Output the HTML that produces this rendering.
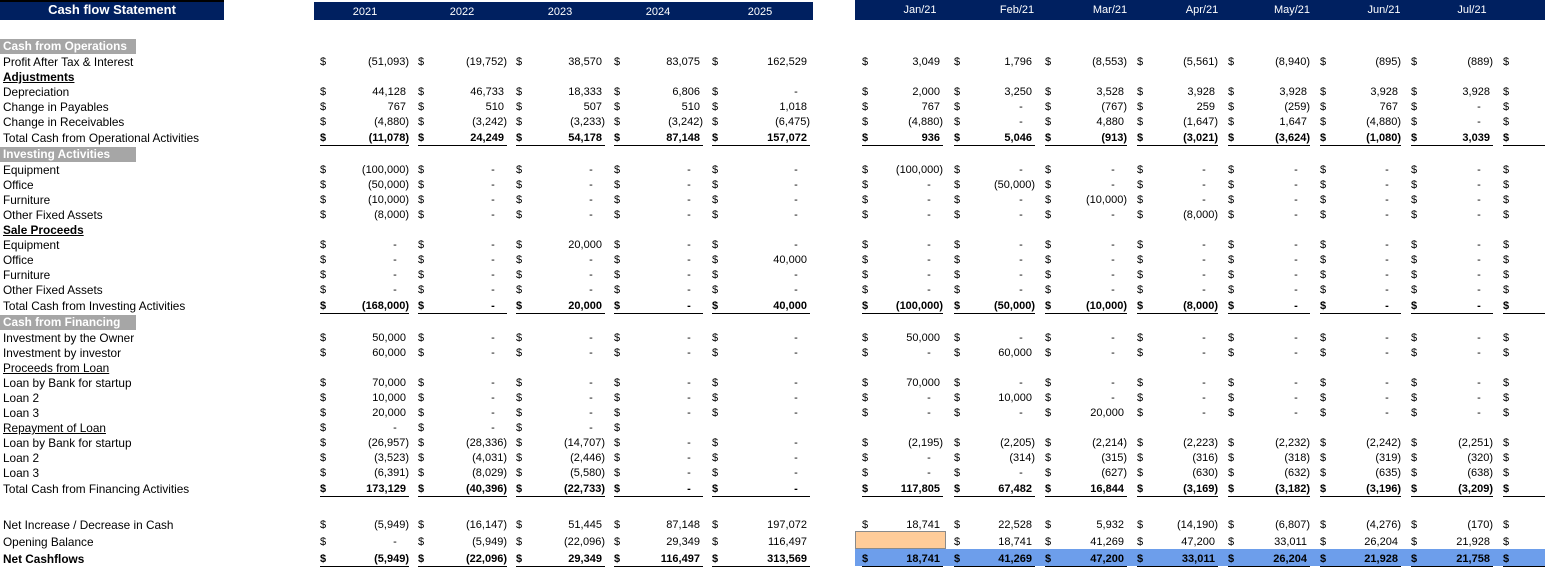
<!DOCTYPE html>
<html><head><meta charset="utf-8"><style>
body{margin:0;width:1545px;height:566px;background:#fff;position:relative;overflow:hidden;font-family:"Liberation Sans",Arial,sans-serif;font-size:11px;color:#000}
.hb{position:absolute;background:#002060;color:#fff}
.r{position:absolute;left:0;width:1545px;height:15px;line-height:15px;margin-top:1px}
.l{position:absolute;left:3px;top:0;white-space:nowrap;font-size:11.8px}
.g{position:absolute;left:0;top:-1px;width:133px;padding-left:3px;background:#a6a6a6;color:#fff;font-weight:bold;font-size:11.8px}
.c{position:absolute;top:0;height:14px;text-align:right;white-space:pre}
.c i{position:absolute;left:0;font-style:normal}
.u .c{border-bottom:1px solid #000}
.b{font-weight:bold}
.y1{left:320px;width:89px}.y2{left:418px;width:89px}.y3{left:516px;width:89px}.y4{left:614px;width:89px}.y5{left:712px;width:98px}
.m1{left:862px;width:81px}.m2{left:954px;width:81px}.m3{left:1045px;width:82px}.m4{left:1137px;width:81px}.m5{left:1228px;width:82px}.m6{left:1320px;width:81px}.m7{left:1411px;width:82px}.m8{left:1503px;width:42px}
.hb span{position:absolute;top:0;transform:translateX(-50%)}
</style></head><body>
<div style="position:absolute;left:0;top:0;width:224px;height:2px;background:#000"></div>
<div class="hb" style="left:0;top:2px;width:224px;height:18px;line-height:16px;text-align:center;font-weight:bold;font-size:13px">Cash flow Statement</div>
<div class="hb" style="left:314px;top:2px;width:499px;height:18px;line-height:21px">
<span style="left:51px">2021</span><span style="left:148px">2022</span><span style="left:246px">2023</span><span style="left:344px">2024</span><span style="left:446px">2025</span></div>
<div class="hb" style="left:855px;top:0;width:690px;height:20px;line-height:20px">
<span style="left:65px">Jan/21</span><span style="left:162px">Feb/21</span><span style="left:255px">Mar/21</span><span style="left:347px">Apr/21</span><span style="left:437px">May/21</span><span style="left:529px">Jun/21</span><span style="left:617px">Jul/21</span></div>

<div class="r" style="top:39px"><div class="g">Cash from Operations</div></div>
<div class="r" style="top:54px"><div class="l">Profit After Tax &amp; Interest</div>
<span class="c y1"><i>$</i>(51,093)</span><span class="c y2"><i>$</i>(19,752)</span><span class="c y3"><i>$</i>38,570 </span><span class="c y4"><i>$</i>83,075 </span><span class="c y5"><i>$</i>162,529 </span>
<span class="c m1"><i>$</i>3,049 </span><span class="c m2"><i>$</i>1,796 </span><span class="c m3"><i>$</i>(8,553)</span><span class="c m4"><i>$</i>(5,561)</span><span class="c m5"><i>$</i>(8,940)</span><span class="c m6"><i>$</i>(895)</span><span class="c m7"><i>$</i>(889)</span><span class="c m8"><i>$</i></span></div>
<div class="r" style="top:69px"><div class="l b" style="text-decoration:underline">Adjustments</div></div>
<div class="r" style="top:84px"><div class="l">Depreciation</div>
<span class="c y1"><i>$</i>44,128 </span><span class="c y2"><i>$</i>46,733 </span><span class="c y3"><i>$</i>18,333 </span><span class="c y4"><i>$</i>6,806 </span><span class="c y5"><i>$</i>-    </span>
<span class="c m1"><i>$</i>2,000 </span><span class="c m2"><i>$</i>3,250 </span><span class="c m3"><i>$</i>3,528 </span><span class="c m4"><i>$</i>3,928 </span><span class="c m5"><i>$</i>3,928 </span><span class="c m6"><i>$</i>3,928 </span><span class="c m7"><i>$</i>3,928 </span><span class="c m8"><i>$</i></span></div>
<div class="r" style="top:99px"><div class="l">Change in Payables</div>
<span class="c y1"><i>$</i>767 </span><span class="c y2"><i>$</i>510 </span><span class="c y3"><i>$</i>507 </span><span class="c y4"><i>$</i>510 </span><span class="c y5"><i>$</i>1,018 </span>
<span class="c m1"><i>$</i>767 </span><span class="c m2"><i>$</i>-    </span><span class="c m3"><i>$</i>(767)</span><span class="c m4"><i>$</i>259 </span><span class="c m5"><i>$</i>(259)</span><span class="c m6"><i>$</i>767 </span><span class="c m7"><i>$</i>-    </span><span class="c m8"><i>$</i></span></div>
<div class="r" style="top:114px"><div class="l">Change in Receivables</div>
<span class="c y1"><i>$</i>(4,880)</span><span class="c y2"><i>$</i>(3,242)</span><span class="c y3"><i>$</i>(3,233)</span><span class="c y4"><i>$</i>(3,242)</span><span class="c y5"><i>$</i>(6,475)</span>
<span class="c m1"><i>$</i>(4,880)</span><span class="c m2"><i>$</i>-    </span><span class="c m3"><i>$</i>4,880 </span><span class="c m4"><i>$</i>(1,647)</span><span class="c m5"><i>$</i>1,647 </span><span class="c m6"><i>$</i>(4,880)</span><span class="c m7"><i>$</i>-    </span><span class="c m8"><i>$</i></span></div>
<div class="r u b" style="top:130px"><div class="l" style="font-weight:normal">Total Cash from Operational Activities</div>
<span class="c y1"><i>$</i>(11,078)</span><span class="c y2"><i>$</i>24,249 </span><span class="c y3"><i>$</i>54,178 </span><span class="c y4"><i>$</i>87,148 </span><span class="c y5"><i>$</i>157,072 </span>
<span class="c m1"><i>$</i>936 </span><span class="c m2"><i>$</i>5,046 </span><span class="c m3"><i>$</i>(913)</span><span class="c m4"><i>$</i>(3,021)</span><span class="c m5"><i>$</i>(3,624)</span><span class="c m6"><i>$</i>(1,080)</span><span class="c m7"><i>$</i>3,039 </span><span class="c m8"><i>$</i></span></div>
<div class="r" style="top:147px"><div class="g">Investing Activities</div></div>
<div class="r" style="top:162px"><div class="l">Equipment</div>
<span class="c y1"><i>$</i>(100,000)</span><span class="c y2"><i>$</i>-    </span><span class="c y3"><i>$</i>-    </span><span class="c y4"><i>$</i>-    </span><span class="c y5"><i>$</i>-    </span>
<span class="c m1"><i>$</i>(100,000)</span><span class="c m2"><i>$</i>-    </span><span class="c m3"><i>$</i>-    </span><span class="c m4"><i>$</i>-    </span><span class="c m5"><i>$</i>-    </span><span class="c m6"><i>$</i>-    </span><span class="c m7"><i>$</i>-    </span><span class="c m8"><i>$</i></span></div>
<div class="r" style="top:177px"><div class="l">Office</div>
<span class="c y1"><i>$</i>(50,000)</span><span class="c y2"><i>$</i>-    </span><span class="c y3"><i>$</i>-    </span><span class="c y4"><i>$</i>-    </span><span class="c y5"><i>$</i>-    </span>
<span class="c m1"><i>$</i>-    </span><span class="c m2"><i>$</i>(50,000)</span><span class="c m3"><i>$</i>-    </span><span class="c m4"><i>$</i>-    </span><span class="c m5"><i>$</i>-    </span><span class="c m6"><i>$</i>-    </span><span class="c m7"><i>$</i>-    </span><span class="c m8"><i>$</i></span></div>
<div class="r" style="top:192px"><div class="l">Furniture</div>
<span class="c y1"><i>$</i>(10,000)</span><span class="c y2"><i>$</i>-    </span><span class="c y3"><i>$</i>-    </span><span class="c y4"><i>$</i>-    </span><span class="c y5"><i>$</i>-    </span>
<span class="c m1"><i>$</i>-    </span><span class="c m2"><i>$</i>-    </span><span class="c m3"><i>$</i>(10,000)</span><span class="c m4"><i>$</i>-    </span><span class="c m5"><i>$</i>-    </span><span class="c m6"><i>$</i>-    </span><span class="c m7"><i>$</i>-    </span><span class="c m8"><i>$</i></span></div>
<div class="r" style="top:207px"><div class="l">Other Fixed Assets</div>
<span class="c y1"><i>$</i>(8,000)</span><span class="c y2"><i>$</i>-    </span><span class="c y3"><i>$</i>-    </span><span class="c y4"><i>$</i>-    </span><span class="c y5"><i>$</i>-    </span>
<span class="c m1"><i>$</i>-    </span><span class="c m2"><i>$</i>-    </span><span class="c m3"><i>$</i>-    </span><span class="c m4"><i>$</i>(8,000)</span><span class="c m5"><i>$</i>-    </span><span class="c m6"><i>$</i>-    </span><span class="c m7"><i>$</i>-    </span><span class="c m8"><i>$</i></span></div>
<div class="r" style="top:222px"><div class="l b" style="text-decoration:underline">Sale Proceeds</div></div>
<div class="r" style="top:237px"><div class="l">Equipment</div>
<span class="c y1"><i>$</i>-    </span><span class="c y2"><i>$</i>-    </span><span class="c y3"><i>$</i>20,000 </span><span class="c y4"><i>$</i>-    </span><span class="c y5"><i>$</i>-    </span>
<span class="c m1"><i>$</i>-    </span><span class="c m2"><i>$</i>-    </span><span class="c m3"><i>$</i>-    </span><span class="c m4"><i>$</i>-    </span><span class="c m5"><i>$</i>-    </span><span class="c m6"><i>$</i>-    </span><span class="c m7"><i>$</i>-    </span><span class="c m8"><i>$</i></span></div>
<div class="r" style="top:252px"><div class="l">Office</div>
<span class="c y1"><i>$</i>-    </span><span class="c y2"><i>$</i>-    </span><span class="c y3"><i>$</i>-    </span><span class="c y4"><i>$</i>-    </span><span class="c y5"><i>$</i>40,000 </span>
<span class="c m1"><i>$</i>-    </span><span class="c m2"><i>$</i>-    </span><span class="c m3"><i>$</i>-    </span><span class="c m4"><i>$</i>-    </span><span class="c m5"><i>$</i>-    </span><span class="c m6"><i>$</i>-    </span><span class="c m7"><i>$</i>-    </span><span class="c m8"><i>$</i></span></div>
<div class="r" style="top:267px"><div class="l">Furniture</div>
<span class="c y1"><i>$</i>-    </span><span class="c y2"><i>$</i>-    </span><span class="c y3"><i>$</i>-    </span><span class="c y4"><i>$</i>-    </span><span class="c y5"><i>$</i>-    </span>
<span class="c m1"><i>$</i>-    </span><span class="c m2"><i>$</i>-    </span><span class="c m3"><i>$</i>-    </span><span class="c m4"><i>$</i>-    </span><span class="c m5"><i>$</i>-    </span><span class="c m6"><i>$</i>-    </span><span class="c m7"><i>$</i>-    </span><span class="c m8"><i>$</i></span></div>
<div class="r" style="top:282px"><div class="l">Other Fixed Assets</div>
<span class="c y1"><i>$</i>-    </span><span class="c y2"><i>$</i>-    </span><span class="c y3"><i>$</i>-    </span><span class="c y4"><i>$</i>-    </span><span class="c y5"><i>$</i>-    </span>
<span class="c m1"><i>$</i>-    </span><span class="c m2"><i>$</i>-    </span><span class="c m3"><i>$</i>-    </span><span class="c m4"><i>$</i>-    </span><span class="c m5"><i>$</i>-    </span><span class="c m6"><i>$</i>-    </span><span class="c m7"><i>$</i>-    </span><span class="c m8"><i>$</i></span></div>
<div class="r u b" style="top:298px"><div class="l" style="font-weight:normal">Total Cash from Investing Activities</div>
<span class="c y1"><i>$</i>(168,000)</span><span class="c y2"><i>$</i>-    </span><span class="c y3"><i>$</i>20,000 </span><span class="c y4"><i>$</i>-    </span><span class="c y5"><i>$</i>40,000 </span>
<span class="c m1"><i>$</i>(100,000)</span><span class="c m2"><i>$</i>(50,000)</span><span class="c m3"><i>$</i>(10,000)</span><span class="c m4"><i>$</i>(8,000)</span><span class="c m5"><i>$</i>-    </span><span class="c m6"><i>$</i>-    </span><span class="c m7"><i>$</i>-    </span><span class="c m8"><i>$</i></span></div>
<div class="r" style="top:315px"><div class="g">Cash from Financing</div></div>
<div class="r" style="top:330px"><div class="l">Investment by the Owner</div>
<span class="c y1"><i>$</i>50,000 </span><span class="c y2"><i>$</i>-    </span><span class="c y3"><i>$</i>-    </span><span class="c y4"><i>$</i>-    </span><span class="c y5"><i>$</i>-    </span>
<span class="c m1"><i>$</i>50,000 </span><span class="c m2"><i>$</i>-    </span><span class="c m3"><i>$</i>-    </span><span class="c m4"><i>$</i>-    </span><span class="c m5"><i>$</i>-    </span><span class="c m6"><i>$</i>-    </span><span class="c m7"><i>$</i>-    </span><span class="c m8"><i>$</i></span></div>
<div class="r" style="top:345px"><div class="l">Investment by investor</div>
<span class="c y1"><i>$</i>60,000 </span><span class="c y2"><i>$</i>-    </span><span class="c y3"><i>$</i>-    </span><span class="c y4"><i>$</i>-    </span><span class="c y5"><i>$</i>-    </span>
<span class="c m1"><i>$</i>-    </span><span class="c m2"><i>$</i>60,000 </span><span class="c m3"><i>$</i>-    </span><span class="c m4"><i>$</i>-    </span><span class="c m5"><i>$</i>-    </span><span class="c m6"><i>$</i>-    </span><span class="c m7"><i>$</i>-    </span><span class="c m8"><i>$</i></span></div>
<div class="r" style="top:360px"><div class="l" style="text-decoration:underline">Proceeds from Loan </div></div>
<div class="r" style="top:375px"><div class="l">Loan by Bank for startup</div>
<span class="c y1"><i>$</i>70,000 </span><span class="c y2"><i>$</i>-    </span><span class="c y3"><i>$</i>-    </span><span class="c y4"><i>$</i>-    </span><span class="c y5"><i>$</i>-    </span>
<span class="c m1"><i>$</i>70,000 </span><span class="c m2"><i>$</i>-    </span><span class="c m3"><i>$</i>-    </span><span class="c m4"><i>$</i>-    </span><span class="c m5"><i>$</i>-    </span><span class="c m6"><i>$</i>-    </span><span class="c m7"><i>$</i>-    </span><span class="c m8"><i>$</i></span></div>
<div class="r" style="top:390px"><div class="l">Loan 2</div>
<span class="c y1"><i>$</i>10,000 </span><span class="c y2"><i>$</i>-    </span><span class="c y3"><i>$</i>-    </span><span class="c y4"><i>$</i>-    </span><span class="c y5"><i>$</i>-    </span>
<span class="c m1"><i>$</i>-    </span><span class="c m2"><i>$</i>10,000 </span><span class="c m3"><i>$</i>-    </span><span class="c m4"><i>$</i>-    </span><span class="c m5"><i>$</i>-    </span><span class="c m6"><i>$</i>-    </span><span class="c m7"><i>$</i>-    </span><span class="c m8"><i>$</i></span></div>
<div class="r" style="top:405px"><div class="l">Loan 3</div>
<span class="c y1"><i>$</i>20,000 </span><span class="c y2"><i>$</i>-    </span><span class="c y3"><i>$</i>-    </span><span class="c y4"><i>$</i>-    </span><span class="c y5"><i>$</i>-    </span>
<span class="c m1"><i>$</i>-    </span><span class="c m2"><i>$</i>-    </span><span class="c m3"><i>$</i>20,000 </span><span class="c m4"><i>$</i>-    </span><span class="c m5"><i>$</i>-    </span><span class="c m6"><i>$</i>-    </span><span class="c m7"><i>$</i>-    </span><span class="c m8"><i>$</i></span></div>
<div class="r" style="top:420px"><div class="l" style="text-decoration:underline">Repayment of Loan </div>
<span class="c y1"><i>$</i>-    </span><span class="c y2"><i>$</i>-    </span><span class="c y3"><i>$</i>-    </span><span class="c y4" style="width:10px"><i>$</i></span></div>
<div class="r" style="top:435px"><div class="l">Loan by Bank for startup</div>
<span class="c y1"><i>$</i>(26,957)</span><span class="c y2"><i>$</i>(28,336)</span><span class="c y3"><i>$</i>(14,707)</span><span class="c y4"><i>$</i>-    </span><span class="c y5"><i>$</i>-    </span>
<span class="c m1"><i>$</i>(2,195)</span><span class="c m2"><i>$</i>(2,205)</span><span class="c m3"><i>$</i>(2,214)</span><span class="c m4"><i>$</i>(2,223)</span><span class="c m5"><i>$</i>(2,232)</span><span class="c m6"><i>$</i>(2,242)</span><span class="c m7"><i>$</i>(2,251)</span><span class="c m8"><i>$</i></span></div>
<div class="r" style="top:450px"><div class="l">Loan 2</div>
<span class="c y1"><i>$</i>(3,523)</span><span class="c y2"><i>$</i>(4,031)</span><span class="c y3"><i>$</i>(2,446)</span><span class="c y4"><i>$</i>-    </span><span class="c y5"><i>$</i>-    </span>
<span class="c m1"><i>$</i>-    </span><span class="c m2"><i>$</i>(314)</span><span class="c m3"><i>$</i>(315)</span><span class="c m4"><i>$</i>(316)</span><span class="c m5"><i>$</i>(318)</span><span class="c m6"><i>$</i>(319)</span><span class="c m7"><i>$</i>(320)</span><span class="c m8"><i>$</i></span></div>
<div class="r" style="top:465px"><div class="l">Loan 3</div>
<span class="c y1"><i>$</i>(6,391)</span><span class="c y2"><i>$</i>(8,029)</span><span class="c y3"><i>$</i>(5,580)</span><span class="c y4"><i>$</i>-    </span><span class="c y5"><i>$</i>-    </span>
<span class="c m1"><i>$</i>-    </span><span class="c m2"><i>$</i>-    </span><span class="c m3"><i>$</i>(627)</span><span class="c m4"><i>$</i>(630)</span><span class="c m5"><i>$</i>(632)</span><span class="c m6"><i>$</i>(635)</span><span class="c m7"><i>$</i>(638)</span><span class="c m8"><i>$</i></span></div>
<div class="r u b" style="top:481px"><div class="l" style="font-weight:normal">Total Cash from Financing Activities</div>
<span class="c y1"><i>$</i>173,129 </span><span class="c y2"><i>$</i>(40,396)</span><span class="c y3"><i>$</i>(22,733)</span><span class="c y4"><i>$</i>-    </span><span class="c y5"><i>$</i>-    </span>
<span class="c m1"><i>$</i>117,805 </span><span class="c m2"><i>$</i>67,482 </span><span class="c m3"><i>$</i>16,844 </span><span class="c m4"><i>$</i>(3,169)</span><span class="c m5"><i>$</i>(3,182)</span><span class="c m6"><i>$</i>(3,196)</span><span class="c m7"><i>$</i>(3,209)</span><span class="c m8"><i>$</i></span></div>
<div class="r" style="top:517px"><div class="l">Net Increase / Decrease in Cash</div>
<span class="c y1"><i>$</i>(5,949)</span><span class="c y2"><i>$</i>(16,147)</span><span class="c y3"><i>$</i>51,445 </span><span class="c y4"><i>$</i>87,148 </span><span class="c y5"><i>$</i>197,072 </span>
<span class="c m1"><i>$</i>18,741 </span><span class="c m2"><i>$</i>22,528 </span><span class="c m3"><i>$</i>5,932 </span><span class="c m4"><i>$</i>(14,190)</span><span class="c m5"><i>$</i>(6,807)</span><span class="c m6"><i>$</i>(4,276)</span><span class="c m7"><i>$</i>(170)</span><span class="c m8"><i>$</i></span></div>
<div style="position:absolute;left:855px;top:531px;width:89px;height:16px;background:#fc9;border:1px solid #8a8a8a"></div>
<div class="r" style="top:534px"><div class="l">Opening Balance</div>
<span class="c y1"><i>$</i>-    </span><span class="c y2"><i>$</i>(5,949)</span><span class="c y3"><i>$</i>(22,096)</span><span class="c y4"><i>$</i>29,349 </span><span class="c y5"><i>$</i>116,497 </span>
<span class="c m2"><i>$</i>18,741 </span><span class="c m3"><i>$</i>41,269 </span><span class="c m4"><i>$</i>47,200 </span><span class="c m5"><i>$</i>33,011 </span><span class="c m6"><i>$</i>26,204 </span><span class="c m7"><i>$</i>21,928 </span><span class="c m8"><i>$</i></span></div>
<div style="position:absolute;left:855px;top:549px;width:690px;height:17px;background:#6d9eeb"></div>
<div class="r u b" style="top:551px"><div class="l">Net Cashflows</div>
<span class="c y1"><i>$</i>(5,949)</span><span class="c y2"><i>$</i>(22,096)</span><span class="c y3"><i>$</i>29,349 </span><span class="c y4"><i>$</i>116,497 </span><span class="c y5"><i>$</i>313,569 </span>
<span class="c m1"><i>$</i>18,741 </span><span class="c m2"><i>$</i>41,269 </span><span class="c m3"><i>$</i>47,200 </span><span class="c m4"><i>$</i>33,011 </span><span class="c m5"><i>$</i>26,204 </span><span class="c m6"><i>$</i>21,928 </span><span class="c m7"><i>$</i>21,758 </span><span class="c m8"><i>$</i></span></div>
</body></html>
